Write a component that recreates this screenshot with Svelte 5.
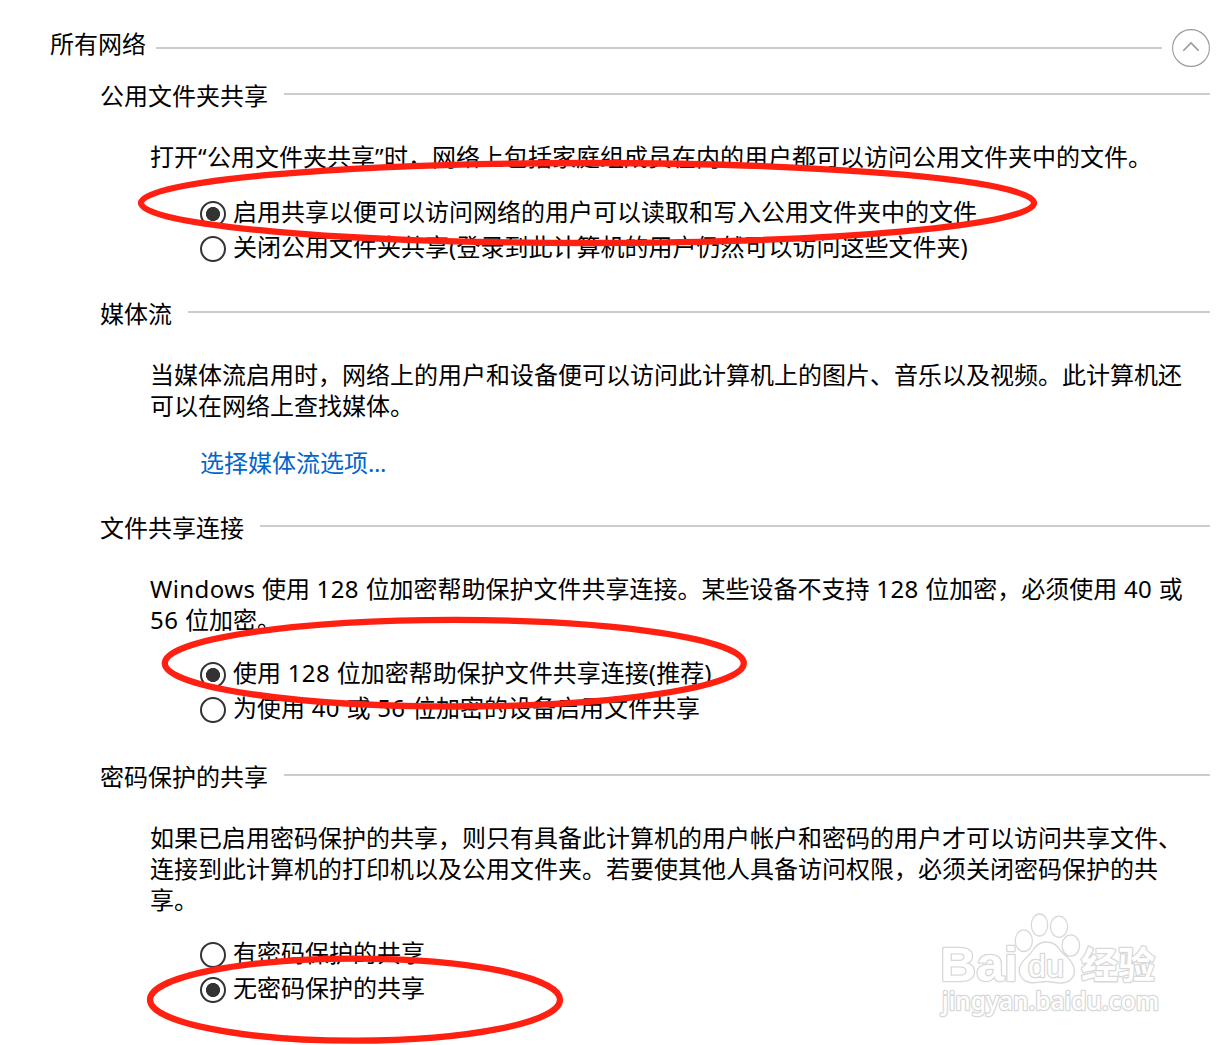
<script>
  const sections = [
    {
      title: '公用文件夹共享',
      key: 'folder',
      lines: ['打开“公用文件夹共享”时，网络上包括家庭组成员在内的用户都可以访问公用文件夹中的文件。'],
      options: [
        { label: '启用共享以便可以访问网络的用户可以读取和写入公用文件夹中的文件', on: true },
        { label: '关闭公用文件夹共享(登录到此计算机的用户仍然可以访问这些文件夹)', on: false }
      ]
    },
    {
      title: '媒体流',
      key: 'media',
      lines: [
        '当媒体流启用时，网络上的用户和设备便可以访问此计算机上的图片、音乐以及视频。此计算机还',
        '可以在网络上查找媒体。'
      ],
      link: '选择媒体流选项...'
    },
    {
      title: '文件共享连接',
      key: 'crypto',
      lines: [
        'Windows 使用 128 位加密帮助保护文件共享连接。某些设备不支持 128 位加密，必须使用 40 或',
        '56 位加密。'
      ],
      options: [
        { label: '使用 128 位加密帮助保护文件共享连接(推荐)', on: true },
        { label: '为使用 40 或 56 位加密的设备启用文件共享', on: false }
      ]
    },
    {
      title: '密码保护的共享',
      key: 'password',
      lines: [
        '如果已启用密码保护的共享，则只有具备此计算机的用户帐户和密码的用户才可以访问共享文件、',
        '连接到此计算机的打印机以及公用文件夹。若要使其他人具备访问权限，必须关闭密码保护的共',
        '享。'
      ],
      options: [
        { label: '有密码保护的共享', on: false },
        { label: '无密码保护的共享', on: true }
      ]
    }
  ];

  // Splits a string into runs so Latin text gets its own metrics.
  const runs = (s) => s.split(/([\x20-\x7e“”]+)/).filter(Boolean)
    .map((t) => ({ t, latin: /^[\x20-\x7e“”]/.test(t) }));
</script>

{#snippet text(s)}{#each runs(s) as r}{#if r.latin}<span class="latin">{r.t}</span>{:else}{r.t}{/if}{/each}{/snippet}

<main>
  <header>
    <h1>所有网络</h1>
    <i class="rule"></i>
    <button aria-label="折叠">
      <svg width="38" height="38" viewBox="0 0 38 38" fill="none">
        <circle cx="19" cy="19" r="18.4" stroke="#999" stroke-width="1.1" />
        <path d="M11.3 21.700 19 14l7.700 7.700" stroke="#999" stroke-width="1.6" />
      </svg>
    </button>
  </header>

  {#each sections as s}
    <section class={s.key}>
      <div class="head"><h2>{s.title}</h2><i class="rule"></i></div>
      <div class="desc">
        {#each s.lines as l}<p>{@render text(l)}</p>{/each}
      </div>
      {#if s.link}
        <a href="#media">{@render text(s.link)}</a>
      {/if}
      {#if s.options}
        <div class="options">
          {#each s.options as o}
            <div class="option"><b class="radio" class:on={o.on}></b><span>{@render text(o.label)}</span></div>
          {/each}
        </div>
      {/if}
    </section>
  {/each}

  <svg class="marks" width="1226" height="1045" viewBox="0 0 1226 1045" fill="none" stroke="#ff2012" stroke-width="6.300">
    <ellipse cx="587.5" cy="203" rx="446.5" ry="40" />
    <ellipse cx="454.300" cy="663.2" rx="289.5" ry="43.3" />
    <ellipse cx="355" cy="999.7" rx="205" ry="41" />
  </svg>

  <svg class="watermark" width="240" height="120" viewBox="0 0 240 120">
    <g fill="#fff" stroke="#d8d8d8" stroke-width="1.3">
      <text class="brand" x="10" y="75.500" textLength="78" lengthAdjust="spacingAndGlyphs">Bai</text>
      <ellipse cx="93.8" cy="35.7" rx="8.6" ry="10.8" />
      <ellipse cx="109.5" cy="20" rx="8.2" ry="11" />
      <ellipse cx="129" cy="21.7" rx="8.6" ry="10.6" />
      <ellipse cx="140.8" cy="40.5" rx="8.8" ry="10.6" />
      <path d="M116.500 37C123 37 127 40 130 45C134 50 140 53 143 60C147 69 142 77.500 132 78C125 78.500 122 76.500 116.500 76.500C110 76.500 106 78.500 100 77.500C90 76 87 66 91 59C94 54 99 51 103 45C106 40 110 37 116.500 37Z" />
      <text class="du" x="98" y="72" textLength="36" lengthAdjust="spacingAndGlyphs">du</text>
      <text class="cn" x="151" y="73.500" textLength="74" lengthAdjust="spacingAndGlyphs">经验</text>
      <text class="url" x="12" y="105" textLength="217" lengthAdjust="spacingAndGlyphs">jingyan.baidu.com</text>
    </g>
  </svg>
</main>

<style>
  :global(body) { background: #fff; }
  main {
    position: relative;
    box-sizing: border-box;
    width: 1226px;
    height: 1045px;
    overflow: hidden;
    padding: 29px 16px 0 50px;
    color: #000;
    font: 24px/31px "Noto Sans CJK SC", sans-serif;
    white-space: nowrap;
  }
  h1, h2, p { margin: 0; font-size: 24px; font-weight: 400; line-height: 31px; }
  .latin { font-family: "Noto Sans", "Noto Sans CJK SC", sans-serif; font-size: 24px; letter-spacing: 0.400px; line-height: 1; }
  header { display: flex; height: 38px; }
  h1 { margin-top: -2px; }
  .rule { flex: 1; height: 2px; background: #ccc; }
  header .rule { margin: 18px 10px 0; }
  button { width: 38px; height: 38px; padding: 0; border: 0; background: none; }
  button svg { display: block; }
  section { box-sizing: border-box; padding-left: 50px; }
  .folder { height: 218px; padding-top: 12px; }
  .media { height: 214px; padding-top: 12px; }
  .crypto { height: 249px; padding-top: 12px; }
  .password { padding-top: 12px; }
  .head { display: flex; height: 31px; }
  .head .rule { margin: 14px 0 0 16px; }
  .desc { padding: 30px 0 0 50px; }
  a { display: block; margin: 26px 0 0 100px; color: #0066cc; text-decoration: none; }
  a .latin { letter-spacing: -0.400px; }
  .options { padding: 23px 0 0 100px; }
  .folder .options { padding-top: 25px; }
  .option { display: flex; height: 35px; align-items: center; }
  .option > span { margin-top: -4px; }
  .option > span { transform: translateY(-1px); }
  .radio { box-sizing: border-box; width: 26px; height: 26px; margin-right: 7px; border: 2px solid #333; border-radius: 50%; }
  .radio.on { background: radial-gradient(circle, #333 6.700px, transparent 7.400px); }
  .marks { position: absolute; left: 0; top: 0; }
  .watermark { position: absolute; left: 930px; top: 905px; }
  .watermark text { paint-order: stroke; stroke-width: 2.600px; stroke-linejoin: round; }
  .brand { font: 700 49px "Liberation Sans", sans-serif; }
  .du { font: 400 32px "Liberation Sans", sans-serif; }
  .cn { font: 700 37px "Noto Sans CJK SC", sans-serif; }
  .url { font: 500 25px "Noto Sans", sans-serif; }
</style>
